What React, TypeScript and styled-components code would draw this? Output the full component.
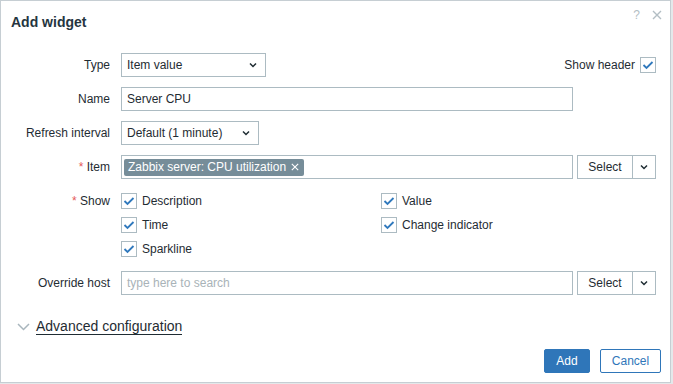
import React from "react";
import styled, { createGlobalStyle } from "styled-components";

const Global = createGlobalStyle`
  html, body { margin: 0; padding: 0; background: #e4e8ea; }
  body { font-family: "Liberation Sans", Arial, sans-serif; font-size: 12px; color: #1f2c33; }
  * { box-sizing: border-box; }
`;

const Dialog = styled.div`
  width: 671px;
  height: 383px;
  background: #fff;
  border: 1px solid #c6ced3;
  display: flex;
  flex-direction: column;
`;

const Header = styled.div`
  display: flex;
  align-items: flex-start;
  justify-content: space-between;
  padding: 13px 8px 0 10px;
  height: 31px;
`;

const Title = styled.h4`
  margin: 0;
  font-size: 14px;
  line-height: 17px;
  font-weight: bold;
  color: #253540;
`;

const HeaderIcons = styled.div`
  display: flex;
  align-items: center;
  gap: 12px;
  margin-top: -6px;
`;

const HelpMark = styled.span`
  font-size: 12px;
  line-height: 14px;
  color: #b3bec4;
`;

const Form = styled.div`
  display: flex;
  flex-direction: column;
  gap: 10px;
  padding-top: 20px;
`;

const Row = styled.div<{ $top?: boolean; $tall?: boolean }>`
  display: flex;
  align-items: ${(p) => (p.$top ? "flex-start" : "center")};
  min-height: ${(p) => (p.$tall ? "25px" : "24px")};
  gap: 11px;
`;

const Label = styled.label<{ $required?: boolean }>`
  width: 109px;
  flex: none;
  text-align: right;
  line-height: 24px;
  color: #1f2c33;
  &::before {
    content: ${(p) => (p.$required ? '"* "' : '""')};
    color: #e45959;
  }
`;

const Field = styled.div`
  width: 535px;
  display: flex;
  align-items: center;
  gap: 4px;
`;

const SelectBox = styled.div<{ $w: number }>`
  width: ${(p) => p.$w}px;
  height: 24px;
  border: 1px solid #acbbc2;
  background: #fff;
  display: flex;
  align-items: center;
  justify-content: space-between;
  padding: 0 8px 0 5px;
  color: #1f2c33;
`;

const TextInput = styled.div<{ $w?: number; $placeholder?: boolean }>`
  ${(p) => (p.$w ? `width: ${p.$w}px;` : "flex: 1;")}
  height: 24px;
  border: 1px solid #acbbc2;
  background: #fff;
  display: flex;
  align-items: center;
  padding: 0 5px;
  color: ${(p) => (p.$placeholder ? "#a9b3b8" : "#1f2c33")};
`;

const MultiInput = styled.div`
  flex: 1;
  height: 24px;
  border: 1px solid #acbbc2;
  background: #fff;
  display: flex;
  align-items: center;
  padding: 0 2px;
`;

const Tag = styled.span`
  display: inline-flex;
  align-items: center;
  gap: 5px;
  height: 17px;
  padding: 0 5px 0 4px;
  background: #768d99;
  color: #fff;
  border-radius: 2px;
  line-height: 17px;
`;

const BtnGroup = styled.div`
  display: flex;
`;

const AltButton = styled.button<{ $w: number }>`
  width: ${(p) => p.$w}px;
  height: 24px;
  border: 1px solid #acbbc2;
  background: #fff;
  color: #1f2c33;
  font-family: inherit;
  font-size: 12px;
  padding: 0;
  display: flex;
  align-items: center;
  justify-content: center;
  & + & { border-left: none; }
`;

const Spacer = styled.div`
  flex: 1;
`;

const CheckLabel = styled.label`
  display: flex;
  align-items: center;
  gap: 5px;
  height: 24px;
  color: #1f2c33;
`;

const CheckBox = styled.span`
  width: 16px;
  height: 16px;
  border: 1px solid #acbbc2;
  background: #fff;
  display: flex;
  align-items: center;
  justify-content: center;
  flex: none;
`;

const CheckGrid = styled.div`
  display: grid;
  grid-template-columns: 260px 260px;
  grid-auto-rows: 24px;
`;

const Advanced = styled.div`
  display: flex;
  align-items: center;
  gap: 6px;
  padding-left: 16px;
  margin-top: 23px;
`;

const AdvLink = styled.span`
  font-size: 14px;
  line-height: 16px;
  color: #1f2c33;
  border-bottom: 1px solid #1f2c33;
`;

const Footer = styled.div`
  margin-top: auto;
  display: flex;
  justify-content: flex-end;
  gap: 10px;
  padding: 0 9px 9px 0;
`;

const Button = styled.button<{ $primary?: boolean; $w: number }>`
  width: ${(p) => p.$w}px;
  height: 24px;
  border-radius: 2px;
  border: 1px solid #2f76b9;
  background: ${(p) => (p.$primary ? "#2f76b9" : "#fff")};
  color: ${(p) => (p.$primary ? "#fff" : "#2f76b9")};
  font-family: inherit;
  font-size: 12px;
  padding: 0;
`;

const Chevron = ({ w = 8 }: { w?: number }) => (
  <svg width={w} height="6" viewBox="0 0 8 6" fill="none">
    <path d="M1 1.5 L4 4.5 L7 1.5" stroke="#1f2c33" strokeWidth="1.5" />
  </svg>
);

const Check = () => (
  <svg width="12" height="10" viewBox="0 0 12 10" fill="none">
    <path d="M1.5 5 L4.5 8 L10.5 2" stroke="#3079bd" strokeWidth="1.8" />
  </svg>
);

const CloseIcon = ({ size, color }: { size: number; color: string }) => (
  <svg width={size} height={size} viewBox="0 0 10 10" fill="none">
    <path d="M1 1 L9 9 M9 1 L1 9" stroke={color} strokeWidth="1.4" />
  </svg>
);

const Checkbox = ({ label }: { label?: string }) => (
  <CheckLabel>
    <CheckBox>
      <Check />
    </CheckBox>
    {label}
  </CheckLabel>
);

const SelectWithMenu = () => (
  <BtnGroup>
    <AltButton $w={56}>Select</AltButton>
    <AltButton $w={23}>
      <Chevron />
    </AltButton>
  </BtnGroup>
);

export default function App() {
  return (
    <>
      <Global />
      <Dialog>
        <Header>
          <Title>Add widget</Title>
          <HeaderIcons>
            <HelpMark>?</HelpMark>
            <CloseIcon size={10} color="#b3bec4" />
          </HeaderIcons>
        </Header>
        <Form>
          <Row $tall>
            <Label>Type</Label>
            <Field>
              <SelectBox $w={145}>
                Item value
                <Chevron />
              </SelectBox>
              <Spacer />
              <CheckLabel>
                Show header
                <CheckBox>
                  <Check />
                </CheckBox>
              </CheckLabel>
            </Field>
          </Row>
          <Row>
            <Label>Name</Label>
            <Field>
              <TextInput $w={452}>Server CPU</TextInput>
            </Field>
          </Row>
          <Row>
            <Label>Refresh interval</Label>
            <Field>
              <SelectBox $w={138}>
                Default (1 minute)
                <Chevron />
              </SelectBox>
            </Field>
          </Row>
          <Row>
            <Label $required>Item</Label>
            <Field>
              <MultiInput>
                <Tag>
                  Zabbix server: CPU utilization
                  <CloseIcon size={8} color="#ffffff" />
                </Tag>
              </MultiInput>
              <SelectWithMenu />
            </Field>
          </Row>
          <Row $top>
            <Label $required>Show</Label>
            <CheckGrid>
              <Checkbox label="Description" />
              <Checkbox label="Value" />
              <Checkbox label="Time" />
              <Checkbox label="Change indicator" />
              <Checkbox label="Sparkline" />
            </CheckGrid>
          </Row>
          <Row>
            <Label>Override host</Label>
            <Field>
              <TextInput $placeholder>type here to search</TextInput>
              <SelectWithMenu />
            </Field>
          </Row>
        </Form>
        <Advanced>
          <svg width="13" height="8" viewBox="0 0 13 8" fill="none">
            <path d="M1 1 L6.5 6.5 L12 1" stroke="#a9b6bd" strokeWidth="1.5" />
          </svg>
          <AdvLink>Advanced configuration</AdvLink>
        </Advanced>
        <Footer>
          <Button $primary $w={46}>Add</Button>
          <Button $w={61}>Cancel</Button>
        </Footer>
      </Dialog>
    </>
  );
}
